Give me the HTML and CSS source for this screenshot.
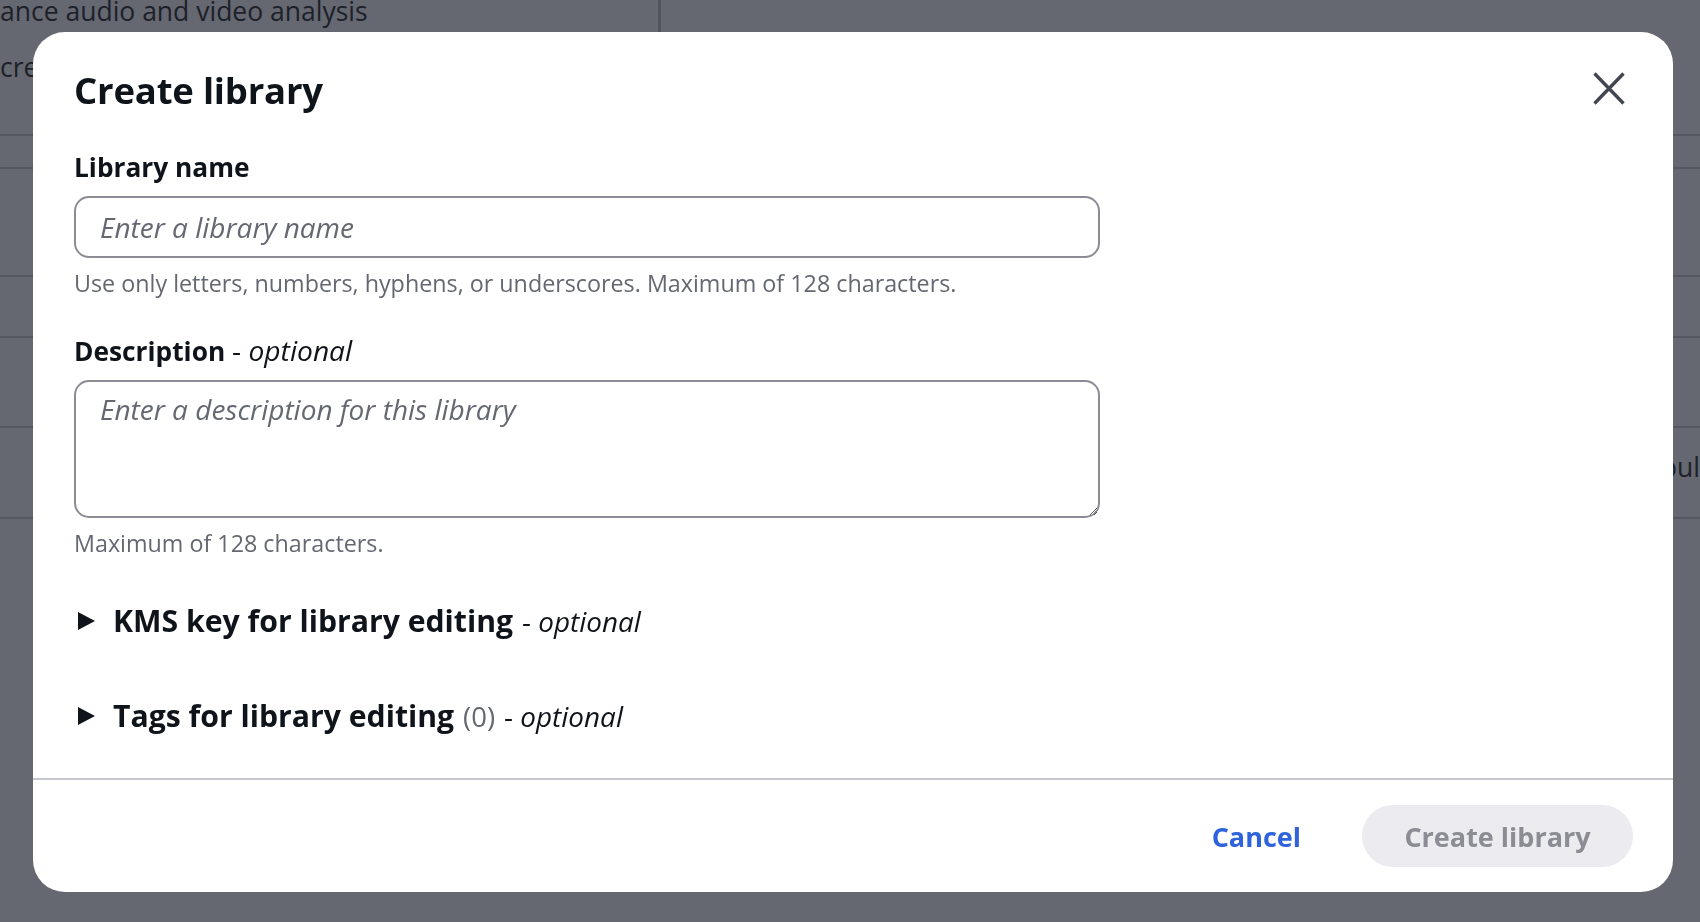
FILE: index.html
```html
<!DOCTYPE html>
<html lang="en">
<head>
<meta charset="utf-8">
<title>Create library</title>
<link rel="stylesheet" href="styles.css">
</head>
<body>
<div class="page">
  <div class="row row-1">
    <div class="cell-main">
      <div class="bg-text bg-text-1">ance audio and video analysis</div>
      <div class="bg-text bg-text-2">create</div>
    </div>
  </div>
  <div class="row row-2"></div>
  <div class="row row-3"></div>
  <div class="row row-4"></div>
  <div class="row row-5"></div>
  <div class="row row-6"><span class="bg-text bg-text-3">Istanbul</span></div>
</div>

<div class="overlay">
  <div class="modal" role="dialog" aria-labelledby="modal-title">
    <div class="modal-header">
      <h2 class="modal-title" id="modal-title">Create library</h2>
      <button class="close-btn" aria-label="Close">
        <svg width="32" height="33" viewBox="0 0 32 33"><path d="M1.5 1.5 L30.5 31.5 M30.5 1.5 L1.5 31.5" stroke="#424650" stroke-width="3.4" fill="none"/></svg>
      </button>
    </div>
    <div class="modal-body">
      <div class="field">
        <label class="label" for="lib-name">Library name</label>
        <input class="input" id="lib-name" type="text" placeholder="Enter a library name">
        <div class="hint">Use only letters, numbers, hyphens, or underscores. Maximum of 128 characters.</div>
      </div>
      <div class="field field-next">
        <label class="label" for="lib-desc">Description <span class="opt">- <i>optional</i></span></label>
        <textarea class="textarea" id="lib-desc" placeholder="Enter a description for this library"></textarea>
        <div class="hint">Maximum of 128 characters.</div>
      </div>
      <div class="expander expander-1">
        <svg class="caret" width="17" height="18" viewBox="0 0 17 18"><polygon points="0,0 17,9 0,18" fill="#0f141a"/></svg>
        <span class="exp-title">KMS key for library editing</span>
        <span class="exp-opt">- <i>optional</i></span>
      </div>
      <div class="expander expander-2">
        <svg class="caret" width="17" height="18" viewBox="0 0 17 18"><polygon points="0,0 17,9 0,18" fill="#0f141a"/></svg>
        <span class="exp-title">Tags for library editing</span>
        <span class="exp-count">(0)</span>
        <span class="exp-opt">- <i>optional</i></span>
      </div>
    </div>
    <div class="modal-footer">
      <button class="btn-link">Cancel</button>
      <button class="btn-primary" disabled>Create library</button>
    </div>
  </div>
</div>
</body>
</html>
```

FILE: styles.css
```css
* { box-sizing: border-box; }

html, body {
  margin: 0;
  padding: 0;
}

body {
  width: 1700px;
  height: 922px;
  overflow: hidden;
  background: #656871;
  font-family: "Open Sans", "Noto Sans", sans-serif;
  color: #1d2129;
}

/* background page (seen through overlay) */
.page {
  width: 1700px;
}

.row {
  border-bottom: 2px solid #555862;
}

.row-1 { height: 136px; display: flex; }
.row-2 { height: 33px; }
.row-3 { height: 108px; }
.row-4 { height: 61px; }
.row-5 { height: 90px; }
.row-6 { height: 91px; display: flex; justify-content: flex-end; align-items: center; }

.cell-main {
  width: 661px;
  border-right: 3px solid #50545d;
  height: 100%;
}

.bg-text {
  font-size: 26.5px;
  line-height: 32px;
  color: #1d2129;
  white-space: nowrap;
}

.bg-text-1 { margin-top: -5px; }
.bg-text-2 { margin-top: 24px; }
.bg-text-3 { margin-top: -12px; }

/* overlay + modal */
.overlay {
  position: fixed;
  inset: 0;
  display: flex;
  align-items: flex-start;
  padding: 32px 0 0 33px;
}

.modal {
  width: 1640px;
  height: 860px;
  background: #ffffff;
  border-radius: 32px;
  display: flex;
  flex-direction: column;
  color: #0f141a;
  overflow: hidden;
}

.modal-header {
  display: flex;
  justify-content: space-between;
  align-items: flex-start;
  padding: 34px 48px 0 41px;
}

.modal-title {
  margin: 0;
  font-size: 36.5px;
  line-height: 48px;
  font-weight: 700;
  letter-spacing: -0.2px;
}

.close-btn {
  border: 0;
  background: transparent;
  padding: 0;
  margin-top: 6px;
  width: 32px;
  height: 33px;
  display: block;
}

.close-btn svg { display: block; }

.modal-body {
  flex: 1;
  padding: 0 40px 0 41px;
}

.field {
  width: 1026px;
  margin-top: 35px;
}

.label {
  display: block;
  height: 36px;
  font-size: 26.3px;
  line-height: 36px;
  font-weight: 700;
  color: #0f141a;
}

.label .opt {
  font-weight: 400;
  font-size: 28.2px;
  line-height: 1;
}

.input,
.textarea {
  display: block;
  width: 1026px;
  margin-top: 11px;
  border: 2px solid #8c8c94;
  border-radius: 15px;
  font-family: "Open Sans", "Noto Sans", sans-serif;
  font-size: 28px;
  color: #0f141a;
  background: #ffffff;
  outline: none;
}

.input {
  height: 62px;
  padding: 0 24px;
}

.textarea {
  height: 138px;
  padding: 10px 24px;
  line-height: 34px;
  resize: vertical;
}

.input::placeholder,
.textarea::placeholder {
  color: #656871;
  font-style: italic;
  opacity: 1;
}

.hint {
  margin-top: 10px;
  font-size: 23.3px;
  line-height: 30px;
  color: #656871;
}

.expander {
  display: flex;
  align-items: center;
  height: 40px;
  padding-left: 4px;
  white-space: nowrap;
}

.expander-1 { margin-top: 43px; }
.expander-2 { margin-top: 55px; }

.caret {
  display: block;
  margin-right: 18px;
  flex: none;
}

.exp-title {
  font-size: 30.2px;
  font-weight: 700;
  line-height: 40px;
  color: #0f141a;
}

.exp-count {
  font-size: 27.5px;
  color: #656871;
  margin-left: 9px;
}

.exp-opt {
  font-size: 27.9px;
  color: #0f141a;
  margin-left: 9px;
}

.modal-footer {
  border-top: 2px solid #c6c6cd;
  padding: 25px 40px 25px 40px;
  display: flex;
  justify-content: flex-end;
  align-items: center;
}

.btn-link {
  border: 0;
  background: transparent;
  font-family: "Open Sans", "Noto Sans", sans-serif;
  font-size: 27px;
  font-weight: 700;
  color: #2f63dc;
  padding: 0 8px;
  margin-right: 53px;
  height: 62px;
}

.btn-primary {
  width: 271px;
  height: 62px;
  border: 0;
  border-radius: 31px;
  background: #ebebf0;
  color: #8c8c94;
  font-family: "Open Sans", "Noto Sans", sans-serif;
  font-size: 27px;
  font-weight: 700;
  padding: 0;
}
```
